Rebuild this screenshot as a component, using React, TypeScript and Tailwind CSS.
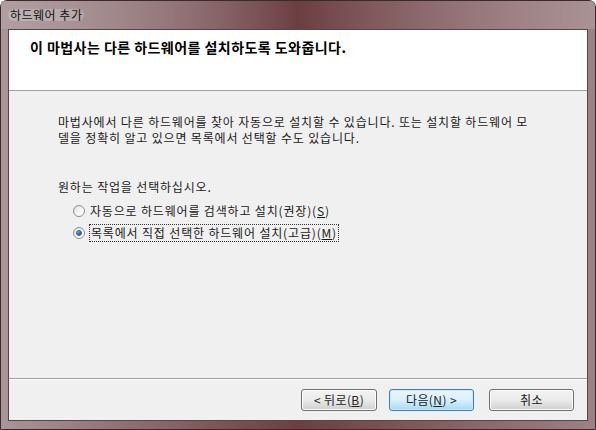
import React from 'react';

const font = { fontFamily: '"Noto Sans CJK KR", "Noto Sans", sans-serif' };

const Radio: React.FC<{ checked?: boolean }> = ({ checked }) => (
    <span className="relative flex h-[12px] w-[12px] shrink-0 items-center justify-center rounded-full border border-[#8f8f8f] bg-gradient-to-br from-[#dcdcdc] via-[#f4f4f4] to-[#ffffff]">
        {checked && (
            <span className="h-[6px] w-[6px] rounded-full border border-[#2b5d8a] bg-gradient-to-br from-[#a9d6f5] via-[#3a7fc0] to-[#1c4f86]" />
        )}
    </span>
);

const WinButton: React.FC<{ children: React.ReactNode; primary?: boolean; className?: string }> = ({ children, primary, className }) => (
    <button
        className={
            'flex h-[22px] items-center justify-center rounded-[3px] border text-[12px] tracking-[0.4px] text-[#222] ' +
            (primary
                ? 'border-[#3c7fb1] bg-gradient-to-b from-[#eaf6fd] via-[#d9f0fc] to-[#a7d9f5] shadow-[inset_0_0_0_1px_#c8e8fa]'
                : 'border-[#707070] bg-gradient-to-b from-[#f2f2f2] via-[#ebebeb] to-[#cfcfcf] shadow-[inset_0_0_0_1px_#fcfcfc]') +
            ' ' + (className ?? '')
        }
    >
        {children}
    </button>
);

export default function App() {
    return (
        <div className="h-[430px] w-[596px] bg-white" style={font}>
            <div className="flex h-[430px] w-[596px] flex-col rounded-t-[7px] border border-[#3b2a2b] bg-gradient-to-r from-[#a8969a] via-[#6b3f42] to-[#9c8286]">
                {/* title bar */}
                <div className="flex h-[28px] items-center bg-gradient-to-r from-[#b3a2a5]/70 via-[#6a3a3d]/0 to-[#b7a0a3]/50 pl-[7px]">
                    <span className="rounded-[8px] bg-white/20 px-[2px] text-[12px] leading-none tracking-[0.5px] text-[#111]">하드웨어 추가</span>
                </div>

                {/* client area */}
                <div className="mx-[7px] flex flex-1 flex-col border border-[#5a4446] bg-[#f0f0f0]">
                    <div className="h-[61px] border-b border-[#a0a0a0] bg-white pl-[21px] pt-[8px]">
                        <h1 className="text-[14px] font-bold leading-[18px] tracking-[0.45px] text-black">이 마법사는 다른 하드웨어를 설치하도록 도와줍니다.</h1>
                    </div>

                    <div className="flex flex-1 flex-col border-b border-[#a0a0a0] pl-[49px] pt-[23px] text-[12px] leading-[16px] tracking-[0.83px] text-[#1a1a1a]">
                        <p className="whitespace-nowrap">
                            마법사에서 다른 하드웨어를 찾아 자동으로 설치할 수 있습니다. 또는 설치할 하드웨어 모
                            <br />
                            델을 정확히 알고 있으면 목록에서 선택할 수도 있습니다.
                        </p>

                        <p className="mt-[33px]">원하는 작업을 선택하십시오.</p>

                        <div className="mt-[8px] flex flex-col gap-[5px] pl-[15px]">
                            <label className="flex items-center gap-[4px]">
                                <Radio />
                                <span className="px-[1px]">
                                    자동으로 하드웨어를 검색하고 설치(권장)(<span className="underline">S</span>)
                                </span>
                            </label>
                            <label className="flex items-center gap-[4px]">
                                <Radio checked />
                                <span className="border border-dotted border-[#333] px-[1px]">
                                    목록에서 직접 선택한 하드웨어 설치(고급)(<span className="underline">M</span>)
                                </span>
                            </label>
                        </div>
                    </div>

                    <div className="flex h-[41px] items-center justify-end border-t border-white pr-[13px]">
                        <div className="flex gap-[12px]">
                            <WinButton className="w-[76px]">
                                &lt; 뒤로(<span className="underline">B</span>)
                            </WinButton>
                            <WinButton primary className="w-[85px]">
                                다음(<span className="underline">N</span>) &gt;
                            </WinButton>
                        </div>
                        <WinButton className="ml-[15px] w-[85px]">취소</WinButton>
                    </div>
                </div>
                <div className="h-[8px]" />
            </div>
        </div>
    );
}
